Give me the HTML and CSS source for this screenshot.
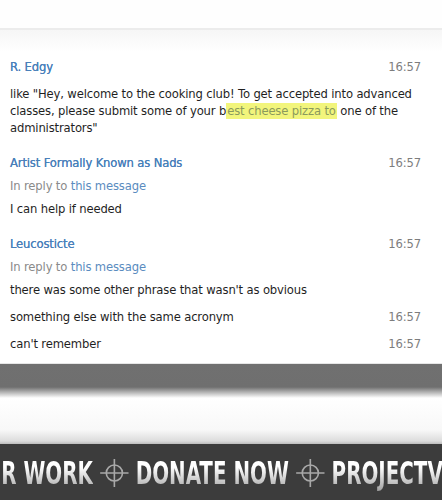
FILE: index.html
```html
<!DOCTYPE html>
<html lang="en">
  <head>
    <meta charset="UTF-8" />
    <meta name="viewport" content="width=device-width, initial-scale=1.0" />
    <title>Cooking Club Chat</title>
    <link rel="stylesheet" href="styles.css">
  </head>

  <body>
    <div class="topbar"></div>

    <div class="chat">
      <div class="msg first">
        <div class="msg-head">
          <span class="name">R. Edgy</span>
          <span class="time">16:57</span>
        </div>
        <p class="text body-top">
          like "Hey, welcome to the cooking club! To get accepted into advanced<br>
          classes, please submit some of your b<span class="mark">est cheese pizza to</span> one of the<br>
          administrators"
        </p>
      </div>

      <div class="msg">
        <div class="msg-head">
          <span class="name">Artist Formally Known as Nads</span>
          <span class="time">16:57</span>
        </div>
        <div class="reply">In reply to <a href="#">this message</a></div>
        <p class="text">I can help if needed</p>
      </div>

      <div class="msg">
        <div class="msg-head">
          <span class="name">Leucosticte</span>
          <span class="time">16:57</span>
        </div>
        <div class="reply">In reply to <a href="#">this message</a></div>
        <p class="text">there was some other phrase that wasn't as obvious</p>
        <div class="msg-line">
          <span class="text">something else with the same acronym</span>
          <span class="time">16:57</span>
        </div>
        <div class="msg-line">
          <span class="text">can't remember</span>
          <span class="time">16:57</span>
        </div>
      </div>
    </div>

    <div class="shelf"></div>

    <div class="banner">
      <div class="ticker">
        <span class="word">SUPPORT OUR WORK</span>
        <svg class="cross" viewBox="0 0 30 30" preserveAspectRatio="none">
          <circle cx="15" cy="15" r="8" />
          <line x1="1" y1="15" x2="29" y2="15" />
          <line x1="15" y1="1" x2="15" y2="29" />
        </svg>
        <span class="word">DONATE NOW</span>
        <svg class="cross" viewBox="0 0 30 30" preserveAspectRatio="none">
          <circle cx="15" cy="15" r="8" />
          <line x1="1" y1="15" x2="29" y2="15" />
          <line x1="15" y1="1" x2="15" y2="29" />
        </svg>
        <span class="word">PROJECTVERITAS.COM</span>
      </div>
    </div>
  </body>
</html>
```

FILE: styles.css
```css
body {
  margin: 0;
  padding: 0;
  width: 442px;
  height: 500px;
  overflow: hidden;
  background: #fff;
  font-family: "DejaVu Sans", Verdana, sans-serif;
}

.topbar {
  height: 28px;
  background: #fefefe;
  border-bottom: 2px solid #ececec;
}

/* chat panel */

.chat {
  height: 333px;
  padding: 0 21px 0 10px;
  background: linear-gradient(#f6f6f6, #fff 22px);
  border-bottom: 1px solid #e6e6e6;
  font-size: 11.6px;
  letter-spacing: -0.15px;
  color: #1f1f1f;
}

.msg {
  padding-top: 18px;
}

.msg.first {
  padding-top: 29px;
}

.msg-head,
.msg-line {
  display: flex;
  justify-content: space-between;
  line-height: 17px;
}

.msg-line {
  margin-top: 10px;
}

.name {
  color: #4a80ba;
  text-shadow: 0 0 0.4px #4a80ba;
}

.time {
  color: #7d7d7d;
}

.reply {
  margin-top: 6px;
  line-height: 17px;
  color: #8a8a8a;
}

.reply a {
  color: #5a8cc0;
  text-decoration: none;
}

.text {
  margin: 6px 0 0;
  line-height: 17px;
}

.msg-line .text {
  margin: 0;
}

.body-top {
  margin-top: 10px;
}

.mark {
  background: #f2f57c;
  color: #8b9a5c;
  padding: 1px 1px;
}

/* grey shelf below the panel */

.shelf {
  height: 80px;
  background: linear-gradient(#707070 0, #6f6f6f 23px, #fff 34px, #f8f8f8 66px, #dcdcdc 77px, #bdbdbd 80px);
}

/* ticker banner */

.banner {
  height: 58px;
  background: #3c3c3c;
  overflow: hidden;
}

.ticker {
  display: flex;
  align-items: center;
  width: max-content;
  height: 58px;
  white-space: nowrap;
  transform: translateX(-143px) scaleX(0.69);
  transform-origin: left center;
}

.word {
  flex-shrink: 0;
  font-family: "DejaVu Sans Condensed", "DejaVu Sans", sans-serif;
  font-stretch: condensed;
  font-weight: bold;
  font-size: 32px;
  background: linear-gradient(#ffffff 35%, #9c9c9c);
  -webkit-background-clip: text;
  background-clip: text;
  color: transparent;
}

.cross {
  flex-shrink: 0;
  width: 44px;
  height: 30px;
  margin: 0 9px;
  fill: none;
  stroke: #a8a8a8;
  stroke-width: 1.6;
}
```
